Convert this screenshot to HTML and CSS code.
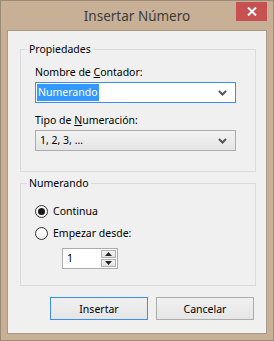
FILE: index.html
```html
<!DOCTYPE html>
<html>
<head>
<meta charset="utf-8">
<link rel="stylesheet" href="styles.css">
</head>
<body>
<div class="window">
  <div class="titlebar">
    <span></span>
    <span class="title">Insertar Número</span>
    <span class="close">
      <svg width="10" height="9" viewBox="0 0 10 9"><path d="M1 0.5L9 8.5M9 0.5L1 8.5" stroke="#fff" stroke-width="2"/></svg>
    </span>
  </div>
  <div class="client">
    <fieldset class="group group-props">
      <legend>Propiedades</legend>
      <div class="label">Nombre de <u>C</u>ontador:</div>
      <div class="combo combo-edit">
        <span class="sel">Numerando</span>
        <svg class="arrow" width="9" height="6" viewBox="0 0 9 6"><path d="M1 1L4.5 4.5L8 1" fill="none" stroke="#555" stroke-width="2"/></svg>
      </div>
      <div class="label label-second">Tipo de <u>N</u>umeración:</div>
      <div class="combo combo-list">
        <span class="value">1, 2, 3, …</span>
        <svg class="arrow" width="9" height="6" viewBox="0 0 9 6"><path d="M1 1L4.5 4.5L8 1" fill="none" stroke="#555" stroke-width="2"/></svg>
      </div>
    </fieldset>
    <fieldset class="group group-num">
      <legend>Numerando</legend>
      <div class="radio-row">
        <span class="radio checked"><span class="dot"></span></span>
        <span>Continua</span>
      </div>
      <div class="radio-row radio-second">
        <span class="radio"></span>
        <span>Empezar desde:</span>
      </div>
      <div class="spin">
        <span class="spin-value">1</span>
        <span class="spin-buttons">
          <span class="spin-btn"><svg width="7" height="4" viewBox="0 0 7 4"><path d="M0 4L3.5 0L7 4Z" fill="#222"/></svg></span>
          <span class="spin-btn"><svg width="7" height="4" viewBox="0 0 7 4"><path d="M0 0L3.5 4L7 0Z" fill="#222"/></svg></span>
        </span>
      </div>
    </fieldset>
    <div class="buttons">
      <span class="btn btn-default">Insertar</span>
      <span class="btn">Cancelar</span>
    </div>
  </div>
</div>
</body>
</html>
```

FILE: styles.css
```css
html, body {
	margin:0;
	padding:0;
}
body {
	font-family:"Noto Sans", "Open Sans", sans-serif;
	font-size:10.5px;
	color:#000;
	background:#c8b096;
}
.window {
	width:274px;
	height:341px;
	box-sizing:border-box;
	border:1px solid #9c8a76;
	background:#c8b096;
	display:flex;
	flex-direction:column;
}
.titlebar {
	height:29px;
	display:grid;
	grid-template-columns:1fr auto 1fr;
	align-items:start;
}
.title {
	font-size:13.5px;
	line-height:20px;
	color:#3c3c3c;
	margin-top:5px;
	white-space:nowrap;
}
.close {
	justify-self:end;
	width:31px;
	height:19px;
	margin-top:1px;
	margin-right:6px;
	background:#c75050;
	display:flex;
	align-items:center;
	justify-content:center;
}
.client {
	margin:0 6px 6px 6px;
	flex:1;
	border:1px solid #a99886;
	background:#f0f0f0;
	padding:10px 12px 11px 12px;
	display:flex;
	flex-direction:column;
}
.group {
	margin:0 -2px 0 0;
	border:1px solid #dcdcdc;
	padding:0 19px 0 14px;
	min-width:0;
}
.group legend {
	padding:0 2px;
	margin-left:-8px;
	line-height:16px;
}
.group-props {
	padding-top:7px;
	padding-bottom:20px;
}
.group-num {
	margin-top:3px;
	padding-top:12px;
	padding-bottom:16px;
}
.label {
	line-height:16px;
	height:16px;
	margin-bottom:2px;
}
.label-second {
	margin-top:9px;
}
.combo {
	height:21px;
	box-sizing:border-box;
	border:1px solid #acacac;
	display:flex;
	align-items:center;
	padding:0 8px 0 1px;
}
.combo-edit {
	border-color:#3c8fe8;
	background:#fff;
}
.combo-list {
	background:linear-gradient(#f2f2f2, #e5e5e5);
	padding-left:4px;
}
.combo .sel {
	background:#3399ff;
	color:#fff;
	line-height:17px;
	padding:0 1px 0 1px;
}
.combo .value {
	line-height:17px;
}
.combo .arrow {
	margin-left:auto;
}
.radio-row {
	display:flex;
	align-items:center;
	height:16px;
	line-height:16px;
}
.radio-second {
	margin-top:6px;
}
.radio {
	width:13px;
	height:13px;
	box-sizing:border-box;
	border:1px solid #333;
	border-radius:50%;
	background:linear-gradient(#fff, #f2f2f2);
	margin-right:5px;
	display:flex;
	align-items:center;
	justify-content:center;
}
.radio .dot {
	width:7px;
	height:7px;
	border-radius:50%;
	background:#1a1a1a;
}
.spin {
	margin:7px 0 0 27px;
	width:56px;
	height:21px;
	box-sizing:border-box;
	border:1px solid #acacac;
	background:#fff;
	display:flex;
}
.spin-value {
	flex:1;
	padding-left:4px;
	line-height:19px;
}
.spin-buttons {
	width:15px;
	display:flex;
	flex-direction:column;
	padding:1px 1px 1px 0;
	gap:1px;
}
.spin-btn {
	flex:1;
	border:1px solid #b0b0b0;
	background:linear-gradient(#f3f3f3, #e3e3e3);
	display:flex;
	align-items:center;
	justify-content:center;
}
.buttons {
	margin-top:11px;
	display:flex;
	justify-content:flex-end;
	gap:8px;
}
.btn {
	width:98px;
	height:23px;
	box-sizing:border-box;
	border:1px solid #acacac;
	background:linear-gradient(#f0f0f0, #e5e5e5);
	display:flex;
	align-items:center;
	justify-content:center;
}
.btn-default {
	border-color:#3c8fe8;
}
```
